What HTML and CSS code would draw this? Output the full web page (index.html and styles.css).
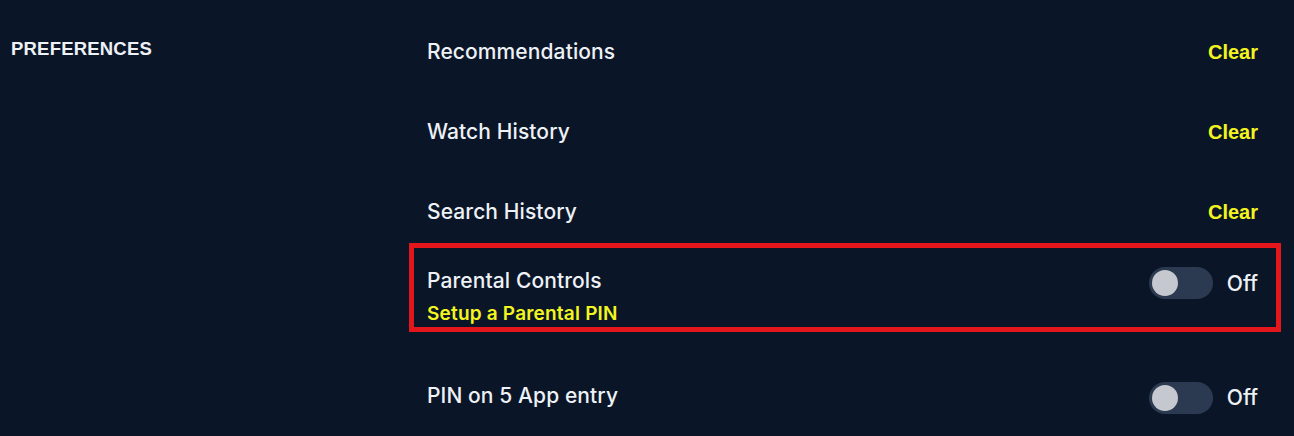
FILE: index.html
```html
<!DOCTYPE html>
<html lang="en">
<head>
    <meta charset="UTF-8">
    <meta name="viewport" content="width=device-width, initial-scale=1.0">
    <title>Preferences</title>
    <link rel="stylesheet" href="styles.css">
</head>
<body>
    <div class="settings">
        <div class="section-title">Preferences</div>

        <div class="section-list">
            <div class="row">
                <span class="label">Recommendations</span>
                <a href="#" class="action">Clear</a>
            </div>
            <div class="row">
                <span class="label">Watch History</span>
                <a href="#" class="action">Clear</a>
            </div>
            <div class="row">
                <span class="label">Search History</span>
                <a href="#" class="action">Clear</a>
            </div>
            <div class="row row-tall highlighted">
                <div class="label-group">
                    <span class="label">Parental Controls</span>
                    <a href="#" class="sub-link">Setup a Parental PIN</a>
                </div>
                <div class="toggle-group">
                    <span class="toggle"><span class="knob"></span></span>
                    <span class="toggle-text">Off</span>
                </div>
            </div>
            <div class="row">
                <span class="label">PIN on 5 App entry</span>
                <div class="toggle-group">
                    <span class="toggle"><span class="knob"></span></span>
                    <span class="toggle-text">Off</span>
                </div>
            </div>
        </div>
    </div>
</body>
</html>
```

FILE: styles.css
```css
body {
    margin: 0;
    background-color: #0a1628;
    color: #eef1f6;
    font-family: 'Inter', 'Noto Sans', sans-serif;
    overflow: hidden;
}

.settings {
    display: flex;
    padding-top: 12px;
}

.section-title {
    width: 416px;
    padding-left: 11px;
    margin-top: 25px;
    font-family: 'Liberation Sans', Arial, sans-serif;
    font-weight: 700;
    font-size: 18.5px;
    line-height: 24px;
    letter-spacing: 0.2px;
    text-transform: uppercase;
    align-self: flex-start;
}

.section-list {
    flex: 1;
    padding-right: 36px;
}

.row {
    display: flex;
    align-items: center;
    justify-content: space-between;
    height: 80px;
}

.label {
    font-size: 21px;
    font-weight: 500;
    line-height: 24px;
    letter-spacing: 0.1px;
}

.action {
    color: #f4f51f;
    text-decoration: none;
    font-family: 'Liberation Sans', Arial, sans-serif;
    font-weight: 700;
    font-size: 20px;
}

.row-tall {
    height: auto;
    align-items: flex-start;
    padding: 17px 0 30px;
}

.highlighted {
    position: relative;
}

.highlighted::after {
    content: '';
    position: absolute;
    top: -9px;
    left: -18px;
    right: -23px;
    bottom: 24px;
    border: 5px solid #e3161c;
    pointer-events: none;
}

.label-group {
    display: flex;
    flex-direction: column;
    gap: 9px;
}

.sub-link {
    color: #f4f51f;
    text-decoration: none;
    font-size: 19px;
    font-weight: 600;
    line-height: 24px;
    letter-spacing: 0.2px;
}

.toggle-group {
    display: flex;
    align-items: center;
    gap: 14px;
    margin-top: 3px;
}

.row-tall .toggle-group {
    margin-top: -2px;
}

.toggle {
    width: 64px;
    height: 32px;
    border-radius: 16px;
    background: #2c3a51;
    display: flex;
    align-items: center;
    padding-left: 3px;
    box-sizing: border-box;
}

.knob {
    width: 26px;
    height: 26px;
    border-radius: 50%;
    background: #c5c8ce;
}

.toggle-text {
    font-size: 21px;
    font-weight: 500;
}
```
